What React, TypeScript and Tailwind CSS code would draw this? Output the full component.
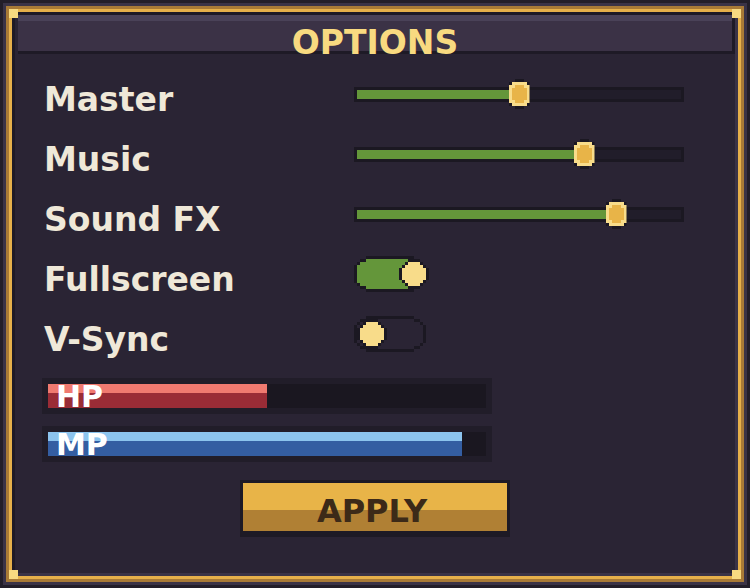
import React from "react";

// pixel-art colours
const C: Record<string, string> = {
  D: "#1b1822",
  G: "#64963a",
  L: "#f8dc8a",
  Y: "#e8b448",
};

function Pixels({ grid }: { grid: string[] }) {
  const w = grid[0].length;
  const h = grid.length;
  const rects: React.ReactNode[] = [];
  grid.forEach((row, y) =>
    row.split("").forEach((ch, x) => {
      if (ch === ".") return;
      rects.push(<rect key={`${x}-${y}`} x={x * 3} y={y * 3} width={3} height={3} fill={C[ch]} />);
    })
  );
  return (
    <svg width={w * 3} height={h * 3} viewBox={`0 0 ${w * 3} ${h * 3}`} shapeRendering="crispEdges" className="block">
      {rects}
    </svg>
  );
}

const KNOB = [
  "..DDD..",
  "DLLLLLD",
  "LLYYYLL",
  "LYYYYYL",
  "LYYYYYL",
  "LYYYYYL",
  "LYYYYYL",
  "LLYYYLL",
  "DLLLLLD",
  "..DDD..",
];

// track outline as [from, to] per row
const TRACK: [number, number][] = [
  [4, 19], [2, 21], [1, 22], [0, 23], [0, 23], [0, 23],
  [0, 23], [0, 23], [0, 23], [1, 22], [2, 21], [4, 19],
];
const CIRCLE: [number, number][] = [
  [2, 5], [1, 6], [0, 7], [0, 7], [0, 7], [0, 7], [1, 6], [2, 5],
];

function toggleGrid(on: boolean) {
  const w = on ? 25 : 24;
  const g: string[][] = Array.from({ length: 12 }, () => Array(w).fill("."));
  TRACK.forEach(([a, b], y) => {
    for (let x = a; x <= b; x++) {
      const edge = y === 0 || y === 11 || x === a || x === b || (y === 1 || y === 10 ? x < 4 || x > 19 : false);
      g[y][x] = edge ? "D" : on ? "G" : ".";
    }
  });
  const ox = on ? 16 : 2;
  const light: boolean[][] = Array.from({ length: 12 }, () => Array(w).fill(false));
  CIRCLE.forEach(([a, b], i) => {
    for (let x = a; x <= b; x++) light[i + 2][ox + x] = true;
  });
  for (let y = 0; y < 12; y++)
    for (let x = 0; x < w; x++) {
      if (light[y][x]) continue;
      const n =
        (light[y - 1]?.[x] ?? false) || (light[y + 1]?.[x] ?? false) || light[y][x - 1] || light[y][x + 1];
      if (n) g[y][x] = "D";
    }
  for (let y = 0; y < 12; y++) for (let x = 0; x < w; x++) if (light[y][x]) g[y][x] = "L";
  return g.map((r) => r.join(""));
}

function Slider({ value }: { value: number }) {
  return (
    <div className="relative w-[330px] h-[15px] border-[3px] border-[#1b1822] bg-[#211d2a]">
      <div className="h-full bg-[#64963a]" style={{ width: `${value}%` }} />
      <div className="absolute top-1/2 -translate-x-1/2 -translate-y-1/2" style={{ left: `${value}%` }}>
        <Pixels grid={KNOB} />
      </div>
    </div>
  );
}

function Bar({ label, value, light, dark }: { label: string; value: number; light: string; dark: string }) {
  return (
    <div className="w-[450px] border-[6px] border-[#211d29] bg-[#1a1720]">
      <div className="relative h-[24px]">
        <div className="h-full flex flex-col" style={{ width: `${value}%` }}>
          <div className="h-[9px]" style={{ background: light }} />
          <div className="flex-1" style={{ background: dark }} />
        </div>
        <span className="absolute left-[8px] top-[-2px] text-[30px] leading-none font-bold text-white">{label}</span>
      </div>
    </div>
  );
}

const ROWS: { label: string; kind: "slider" | "toggle"; value: number }[] = [
  { label: "Master", kind: "slider", value: 50 },
  { label: "Music", kind: "slider", value: 70 },
  { label: "Sound FX", kind: "slider", value: 80 },
  { label: "Fullscreen", kind: "toggle", value: 1 },
  { label: "V-Sync", kind: "toggle", value: 0 },
];

export default function App() {
  return (
    <div className="relative w-[750px] h-[588px] bg-[#221e29] p-[3px] font-['DejaVu_Sans',sans-serif] select-none">
      <div className="h-full bg-[#3a3346] p-[3px]">
        <div className="h-full bg-[#a87a36] p-[3px]">
          <div className="h-full bg-[#e6b04a] p-[3px]">
            <div className="h-full border-[3px] border-t-[#1e1a26] border-l-[#1e1a26] border-b-[#3a3346] border-r-[#3a3346] bg-[#2a2434] flex flex-col">
              {/* title bar */}
              <div className="ml-[3px] bg-[#1e1a26] pr-[3px] pb-[3px]">
                <div className="h-[36px] border-t-[6px] border-[#4a4258] bg-[#3b3246] pt-[5px] text-center">
                  <span className="text-[33px] leading-[33px] font-bold text-[#f8da80]">OPTIONS</span>
                </div>
              </div>

              <div className="mt-[10px] pl-[29px] flex flex-col">
                {ROWS.map((r) => (
                  <div key={r.label} className="h-[60px] flex items-center">
                    <div className="w-[310px] pt-[11px] text-[33px] leading-[33px] font-bold text-[#efe8d8]">
                      {r.label}
                    </div>
                    {r.kind === "slider" ? <Slider value={r.value} /> : <Pixels grid={toggleGrid(r.value === 1)} />}
                  </div>
                ))}
              </div>

              <div className="mt-[14px] pl-[27px] flex flex-col gap-[12px]">
                <Bar label="HP" value={50} light="#f07a70" dark="#9a2c36" />
                <Bar label="MP" value={94.5} light="#8cc4ee" dark="#345ea2" />
              </div>

              <div className="mt-[18px] flex justify-center">
                <div className="relative w-[270px] border-[3px] border-b-[6px] border-[#1d1a25]">
                  <div className="mx-[3px] h-[3px] bg-[#f8dc8a]" />
                  <div className="h-[27px] bg-[#e8b448] -mt-[3px] border-t-[3px] border-transparent" />
                  <div className="h-[21px] bg-[#b08034]" />
                  <span className="absolute inset-x-0 top-[12px] pr-[6px] text-center text-[32px] leading-[32px] font-bold text-[#3c2a18]">
                    APPLY
                  </span>
                </div>
              </div>
            </div>
          </div>
        </div>
      </div>
      {/* corner studs */}
      <div className="absolute left-[9px] top-[9px] w-[9px] h-[9px] bg-[#f8da80]" />
      <div className="absolute left-[732px] top-[9px] w-[9px] h-[9px] bg-[#f8da80]" />
      <div className="absolute left-[9px] top-[570px] w-[9px] h-[9px] bg-[#f8da80]" />
      <div className="absolute left-[732px] top-[570px] w-[9px] h-[9px] bg-[#f8da80]" />
    </div>
  );
}
